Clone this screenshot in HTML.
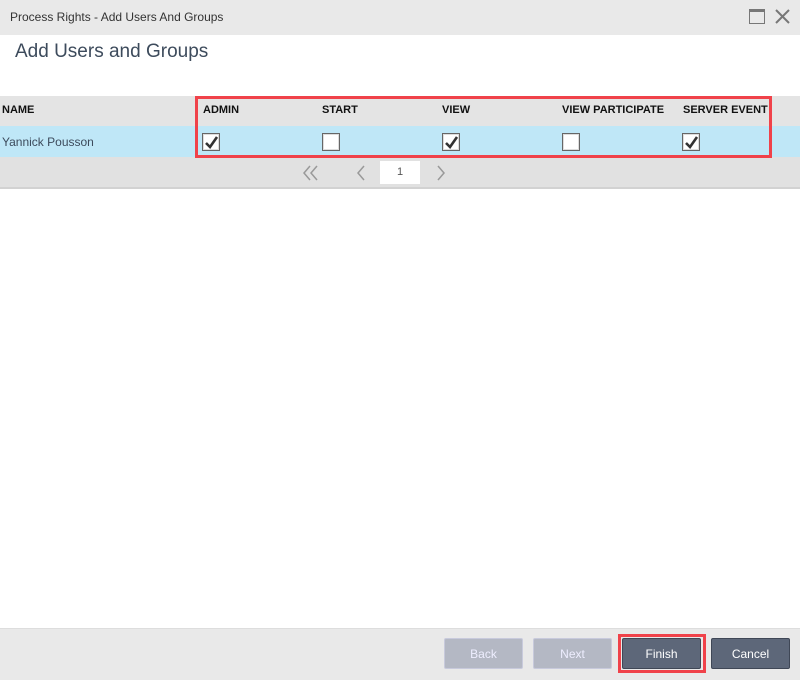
<!DOCTYPE html>
<html><head><style>
*{margin:0;padding:0;box-sizing:border-box}
body{width:800px;height:680px;background:#fff;font-family:"Liberation Sans",sans-serif;position:relative;overflow:hidden}
.abs{position:absolute}
.cb{position:absolute;top:133px;width:18px;height:18px;background:#fff;border:1px solid #666;box-shadow:inset 0 0 0 1px #ddd}
.cb svg{position:absolute;left:1px;top:1px}
.hd{position:absolute;top:104px;font-size:11px;color:#111;font-weight:bold;letter-spacing:0}
.btn{position:absolute;top:638px;height:31px;width:79px;border-radius:2px;font-size:12px;text-align:center;line-height:31px}
</style></head><body>
<div class="abs" style="left:0;top:0;width:800px;height:35px;background:#e9e9e9"></div>
<div class="abs" style="left:10px;top:10px;font-size:12px;color:#333">Process Rights - Add Users And Groups</div>
<div class="abs" style="left:749px;top:9px;width:16px;height:15px;border:1px solid #777;border-top:3px solid #777"></div>
<svg class="abs" style="left:774px;top:8px" width="17" height="17"><path d="M2 2L15 15M15 2L2 15" stroke="#777" stroke-width="2"/></svg>
<div class="abs" style="left:15px;top:41px;font-size:19px;color:#3d4b5c">Add Users and Groups</div>
<div class="abs" style="left:0;top:96px;width:800px;height:30px;background:#e4e4e4"></div>
<div class="abs" style="left:0;top:126px;width:800px;height:31px;background:#bfe7f7"></div>
<div class="abs" style="left:0;top:157px;width:800px;height:32px;background:#e1e1e1;border-bottom:2px solid #d2d2d2"></div>
<div class="hd" style="left:2px">NAME</div>
<div class="hd" style="left:203px">ADMIN</div>
<div class="hd" style="left:322px">START</div>
<div class="hd" style="left:442px">VIEW</div>
<div class="hd" style="left:562px">VIEW PARTICIPATE</div>
<div class="hd" style="left:683px">SERVER EVENT</div>
<div class="abs" style="left:2px;top:135px;font-size:12px;color:#3d4b5c">Yannick Pousson</div>
<div class="cb" style="left:202px"><svg width="15" height="15"><path d="M2 8L6 12L13 2" stroke="#333" stroke-width="2.6" fill="none"/></svg></div>
<div class="cb" style="left:322px"></div>
<div class="cb" style="left:442px"><svg width="15" height="15"><path d="M2 8L6 12L13 2" stroke="#333" stroke-width="2.6" fill="none"/></svg></div>
<div class="cb" style="left:562px"></div>
<div class="cb" style="left:682px"><svg width="15" height="15"><path d="M2 8L6 12L13 2" stroke="#333" stroke-width="2.6" fill="none"/></svg></div>
<div class="abs" style="left:195px;top:96px;width:577px;height:62px;border:3px solid #f0424a"></div>
<svg class="abs" style="left:300px;top:164px" width="150" height="18"><path d="M10 2L4 9L10 16M17 2L11 9L17 16M64 2L58 9L64 16M138 2L144 9L138 16" stroke="#999" stroke-width="1.5" fill="none"/></svg>
<div class="abs" style="left:380px;top:161px;width:40px;height:23px;background:#fff;font-size:11px;color:#555;text-align:center;line-height:23px">1</div>
<div class="abs" style="left:0;top:628px;width:800px;height:52px;background:#e9e9e9;border-top:1px solid #ddd"></div>
<div class="btn" style="left:444px;background:#b4b8c4;color:#eef;border:1px solid #c8cadc">Back</div>
<div class="btn" style="left:533px;background:#b4b8c4;color:#eef;border:1px solid #c8cadc">Next</div>
<div class="abs" style="left:618px;top:634px;width:88px;height:39px;border:3px solid #f0424a"></div>
<div class="btn" style="left:622px;background:#5d6779;color:#fff;border:1px solid #3f4756">Finish</div>
<div class="btn" style="left:711px;background:#5d6779;color:#fff;border:1px solid #3f4756">Cancel</div>
</body></html>
